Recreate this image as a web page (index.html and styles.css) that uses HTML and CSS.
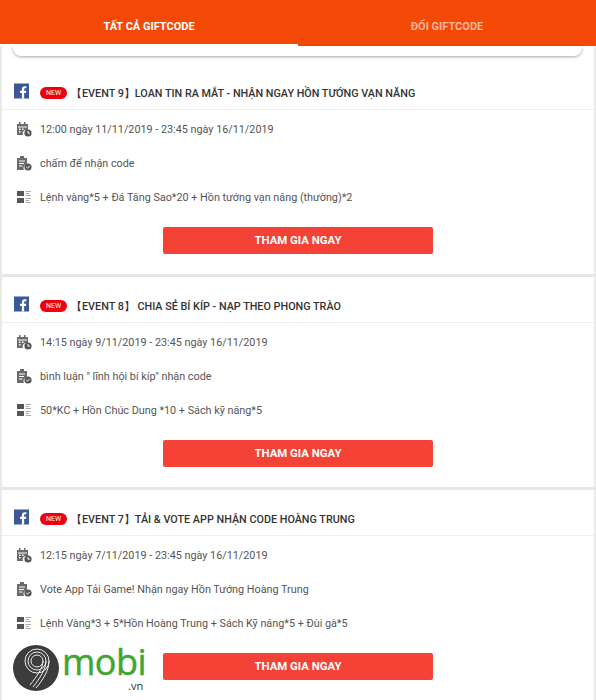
FILE: index.html
```html
<!DOCTYPE html>
<html lang="vi">
<head>
<meta charset="utf-8">
<title>Giftcode</title>
<link rel="stylesheet" href="styles.css">
</head>
<body>
<svg class="defs" width="0" height="0" aria-hidden="true">
  <symbol id="i-cal" viewBox="0 0 16 16">
    <path d="M1 3h11v6H9a4 4 0 0 0-2 5H1z" fill="#6a6a6a"/>
    <rect x="2" y="5.500" width="9" height="1" fill="#fff"/>
    <path d="M3 7.500h1.500V9H3zM6 7.500h1.500V9H6zM3 10h1.500v1.500H3z" fill="#fff"/>
    <rect x="3" y="1" width="1.500" height="3" fill="#6a6a6a"/>
    <rect x="8" y="1" width="1.500" height="3" fill="#6a6a6a"/>
    <circle cx="12" cy="12" r="3.600" fill="#555"/>
    <path d="M12 10v2.200h1.800" stroke="#fff" stroke-width="1" fill="none"/>
  </symbol>
  <symbol id="i-task" viewBox="0 0 16 16">
    <path d="M1 3h3V1h4v2h3v6a4 4 0 0 0-3 6H1z" fill="#6a6a6a"/>
    <path d="M3 6h6M3 8.500h5M3 11h3.500" stroke="#fff" stroke-width="1"/>
    <circle cx="12" cy="12" r="3.600" fill="#555"/>
    <path d="M10.300 12l1.200 1.200 2.200-2.300" stroke="#fff" stroke-width="1" fill="none"/>
  </symbol>
  <symbol id="i-list" viewBox="0 0 16 16">
    <rect x="1" y="2" width="7" height="5" fill="#555"/>
    <rect x="1" y="9" width="7" height="5" fill="#555"/>
    <path d="M9.500 2.500H15M9.500 4.500H13M9.500 6.500H15M9.500 9.500H15M9.500 11.500H13M9.500 13.500H15" stroke="#aaa" stroke-width="1"/>
  </symbol>
  <symbol id="i-fb" viewBox="0 0 16 16">
    <rect width="16" height="16" fill="#3b5998"/>
    <path d="M10.800 16V10h2l.3-2.400h-2.300V6.200c0-.7.2-1.200 1.200-1.200h1.200V3c-.2 0-1-.1-1.800-.1-1.800 0-3 1.100-3 3.100v1.600H6.400V10h2v6z" fill="#fff"/>
  </symbol>
</svg>

<header class="tabs">
  <div class="tab tab-active">TẤT CẢ GIFTCODE</div>
  <div class="tab">ĐỔI GIFTCODE</div>
</header>

<main class="content">
  <div class="search-rest"></div>

  <article class="card">
    <div class="card-head">
      <svg class="fb"><use href="#i-fb"/></svg>
      <span class="new">NEW</span>
      <h2 class="title">【EVENT 9】LOAN TIN RA MẮT - NHẬN NGAY HỒN TƯỚNG VẠN NĂNG</h2>
    </div>
    <div class="rows">
      <div class="row"><svg class="ico"><use href="#i-cal"/></svg>12:00 ngày 11/11/2019 - 23:45 ngày 16/11/2019</div>
      <div class="row"><svg class="ico"><use href="#i-task"/></svg>chấm để nhận code</div>
      <div class="row"><svg class="ico"><use href="#i-list"/></svg>Lệnh vàng*5 + Đá Tăng Sao*20 + Hồn tướng vạn năng (thường)*2</div>
    </div>
    <div class="action"><a class="btn">THAM GIA NGAY</a></div>
  </article>

  <article class="card">
    <div class="card-head">
      <svg class="fb"><use href="#i-fb"/></svg>
      <span class="new">NEW</span>
      <h2 class="title">【EVENT 8】 CHIA SẺ BÍ KÍP - NẠP THEO PHONG TRÀO</h2>
    </div>
    <div class="rows">
      <div class="row"><svg class="ico"><use href="#i-cal"/></svg>14:15 ngày 9/11/2019 - 23:45 ngày 16/11/2019</div>
      <div class="row"><svg class="ico"><use href="#i-task"/></svg>bình luận " lĩnh hội bí kíp" nhận code</div>
      <div class="row"><svg class="ico"><use href="#i-list"/></svg>50*KC + Hồn Chúc Dung *10 + Sách kỹ năng*5</div>
    </div>
    <div class="action"><a class="btn">THAM GIA NGAY</a></div>
  </article>

  <article class="card">
    <div class="card-head">
      <svg class="fb"><use href="#i-fb"/></svg>
      <span class="new">NEW</span>
      <h2 class="title">【EVENT 7】TẢI &amp; VOTE APP NHẬN CODE HOÀNG TRUNG</h2>
    </div>
    <div class="rows">
      <div class="row"><svg class="ico"><use href="#i-cal"/></svg>12:15 ngày 7/11/2019 - 23:45 ngày 16/11/2019</div>
      <div class="row"><svg class="ico"><use href="#i-task"/></svg>Vote App Tải Game! Nhận ngay Hồn Tướng Hoàng Trung</div>
      <div class="row"><svg class="ico"><use href="#i-list"/></svg>Lệnh Vàng*3 + 5*Hồn Hoàng Trung + Sách Kỹ năng*5 + Đùi gà*5</div>
    </div>
    <div class="action"><a class="btn">THAM GIA NGAY</a></div>
  </article>
</main>

<div class="logo">
  <svg class="logo-mark" viewBox="0 0 46 46">
    <circle cx="23" cy="23" r="23" fill="#3c3c3c"/>
    <g fill="none" stroke="#f0f0f0" stroke-width="1">
      <circle cx="24" cy="16" r="12"/>
      <circle cx="24" cy="16" r="9"/>
      <circle cx="24" cy="16" r="6"/>
      <path d="M36 16c0 9-6 19-13 27M33 16c0 8-6 17-13 26M30 16c0 7-6 15-13 24"/>
    </g>
  </svg>
  <div class="logo-text">
    <span class="logo-mobi">mobi</span>
    <span class="logo-vn">.vn</span>
  </div>
</div>
</body>
</html>
```

FILE: styles.css
```css
* { box-sizing: border-box; }
html, body { margin: 0; padding: 0; }
body {
  width: 596px;
  height: 700px;
  overflow: hidden;
  position: relative;
  background: #fff;
  font-family: Roboto, "Liberation Sans", sans-serif;
  color: #333;
}
.defs { position: absolute; }

.tabs {
  display: flex;
  height: 46px;
  background: #f44806;
}
.tab {
  width: 298px;
  height: 46px;
  line-height: 53px;
  text-align: center;
  font-size: 11px;
  font-weight: 700;
  color: #fbb79c;
}
.tab-active {
  color: #fff;
  border-bottom: 2px solid #fff;
}

.content {
  border-left: 2px solid #e9e9e9;
  border-right: 2px solid #e9e9e9;
}
.search-rest {
  height: 10px;
  margin: 0 12px 8px 11px;
  background: #fff;
  border-radius: 0 0 8px 8px;
  box-shadow: 0 1px 3px rgba(0, 0, 0, .35);
}

.card {
  height: 213px;
  border-bottom: 3px solid #e6e6e6;
}
.card-head {
  display: flex;
  align-items: center;
  height: 46px;
  padding: 15px 0 0 12px;
  border-bottom: 1px solid #eee;
}
.fb { width: 15px; height: 16px; margin: -6px 11px 0 0; flex: none; }
.new {
  width: 27px;
  height: 12px;
  border-radius: 6px;
  background: #f0000f;
  color: #fff;
  font-size: 7px;
  line-height: 12px;
  text-align: center;
  margin-right: 4px;
  margin-top: -2px;
  flex: none;
}
.title {
  margin: 0;
  font-size: 10.800px;
  font-weight: 500;
  color: #333;
  white-space: nowrap;
}

.rows {
  margin-top: 2px;
}
.row {
  display: flex;
  align-items: center;
  height: 34px;
  padding-left: 14px;
  font-size: 10.800px;
  color: #555;
}
.ico { width: 16px; height: 16px; margin-right: 8px; flex: none; }

.action {
  display: flex;
  justify-content: center;
  padding-top: 13px;
}
.btn {
  display: block;
  width: 270px;
  height: 27px;
  line-height: 27px;
  background: #f44336;
  border-radius: 2px;
  color: #fff;
  text-align: center;
  font-size: 11.400px;
  font-weight: 700;
}

.logo {
  position: absolute;
  left: 13px;
  top: 645px;
  display: flex;
}
.logo-mark { width: 46px; height: 46px; }
.logo-text {
  position: relative;
  width: 90px;
  margin-left: 3px;
  font-family: "Open Sans", sans-serif;
  color: #3fa535;
}
.logo-mobi {
  display: block;
  font-size: 36px;
  line-height: 34px;
  letter-spacing: -.5px;
  -webkit-text-stroke: .5px #3fa535;
}
.logo-vn {
  position: absolute;
  left: 66px;
  top: 36px;
  font-size: 11px;
  line-height: 10px;
  color: #333;
}
```
